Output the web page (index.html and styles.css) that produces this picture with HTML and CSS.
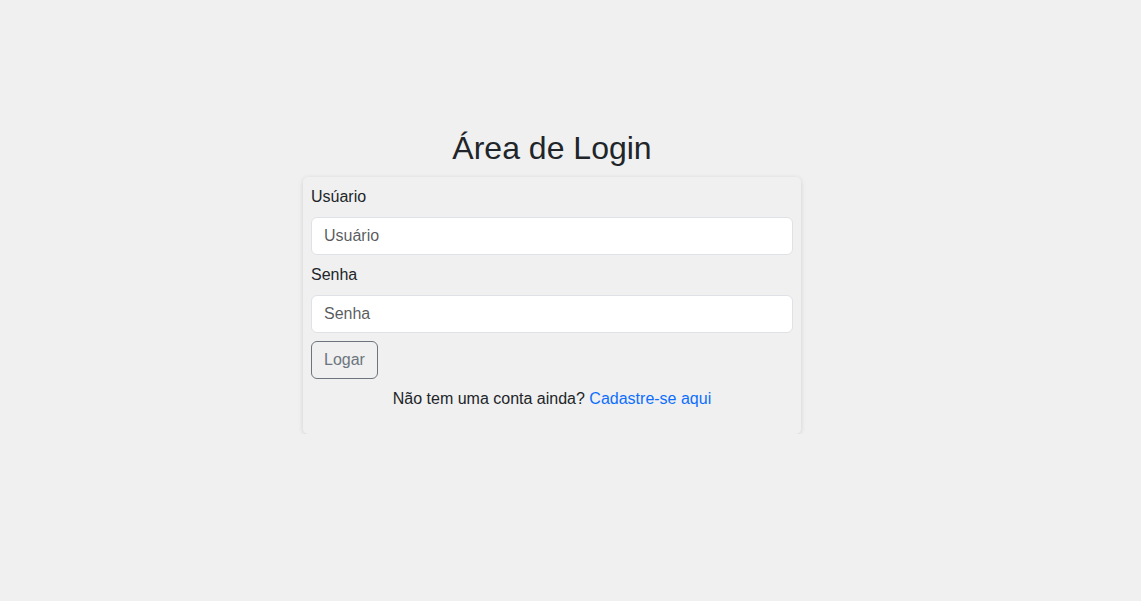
FILE: index.html
```html
<!DOCTYPE html>
<html lang="pt-BR">
<head>
<meta charset="utf-8">
<title>Área de Login</title>
<link rel="stylesheet" href="styles.css">
</head>
<body>
<main class="page">
  <h1 class="title">Área de Login</h1>
  <form class="card">
    <label class="label" for="usuario">Usúario</label>
    <input class="input" id="usuario" type="text" placeholder="Usuário">
    <label class="label label-spaced" for="senha">Senha</label>
    <input class="input" id="senha" type="password" placeholder="Senha">
    <div class="actions"><button type="button" class="btn">Logar</button></div>
    <p class="signup">Não tem uma conta ainda? <a href="#" class="link">Cadastre-se aqui</a></p>
  </form>
</main>
</body>
</html>
```

FILE: styles.css
```css
* { box-sizing: border-box; }
html, body { margin: 0; padding: 0; }
body {
  background: #f0f0f0;
  color: #212529;
  font-family: "Liberation Sans", Arial, sans-serif;
  font-size: 16px;
  line-height: 1.5;
}
.page {
  display: flex;
  flex-direction: column;
  align-items: center;
  padding-top: 129px;
  padding-right: 37px;
}
.title {
  margin: 0 0 10px;
  font-size: 32px;
  font-weight: 400;
  line-height: 1.2;
  color: #212529;
}
.card {
  width: 498px;
  padding: 8px 8px 8px;
  background: #f0f0f0;
  border-radius: 5px;
  box-shadow: 0 1px 5px rgba(0,0,0,0.13);
  display: flex;
  flex-direction: column;
}
.label {
  display: block;
  margin-bottom: 8px;
}
.label-spaced { margin-top: 8px; }
.input {
  display: block;
  width: 100%;
  height: 38px;
  padding: 6px 12px;
  font: inherit;
  color: #212529;
  background: #fff;
  border: 1px solid #dee2e6;
  border-radius: 6px;
  outline: none;
}
.input::placeholder { color: rgba(33,37,41,0.75); }
.actions { margin-top: 8px; }
.btn {
  height: 38px;
  padding: 6px 12px;
  font: inherit;
  color: #6c757d;
  background: transparent;
  border: 1px solid #6c757d;
  border-radius: 6px;
  cursor: pointer;
}
.signup {
  margin: 8px 0 15px;
  text-align: center;
}
.link {
  color: #0d6efd;
  text-decoration: none;
}
```
